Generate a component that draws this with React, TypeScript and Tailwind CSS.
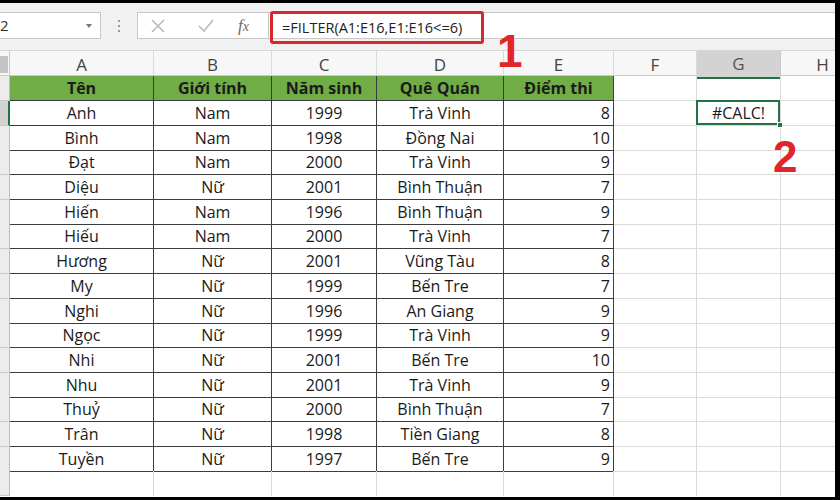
import React from "react";

type Row = [string, string, string, string, string];

const rows: Row[] = [
  ["Anh", "Nam", "1999", "Trà Vinh", "8"],
  ["Bình", "Nam", "1998", "Đồng Nai", "10"],
  ["Đạt", "Nam", "2000", "Trà Vinh", "9"],
  ["Diệu", "Nữ", "2001", "Bình Thuận", "7"],
  ["Hiến", "Nam", "1996", "Bình Thuận", "9"],
  ["Hiếu", "Nam", "2000", "Trà Vinh", "7"],
  ["Hương", "Nữ", "2001", "Vũng Tàu", "8"],
  ["My", "Nữ", "1999", "Bến Tre", "7"],
  ["Nghi", "Nữ", "1996", "An Giang", "9"],
  ["Ngọc", "Nữ", "1999", "Trà Vinh", "9"],
  ["Nhi", "Nữ", "2001", "Bến Tre", "10"],
  ["Nhu", "Nữ", "2001", "Trà Vinh", "9"],
  ["Thuỷ", "Nữ", "2000", "Bình Thuận", "7"],
  ["Trân", "Nữ", "1998", "Tiền Giang", "8"],
  ["Tuyền", "Nữ", "1997", "Bến Tre", "9"],
];

const headers = ["Tên", "Giới tính", "Năm sinh", "Quê Quán", "Điểm thi"];
const letters = ["A", "B", "C", "D", "E", "F", "G", "H"];

// column widths: row header, A..H
const cols = "grid grid-cols-[10px_144px_118px_105px_127px_110px_83px_84px_84px]";

const tableCell = "border-r border-b border-[#3c3c3c] flex items-center";
const emptyCell = "border-r border-b border-[#dadada]";

const Toolbar = () => (
  <div className="h-[48px] bg-[#f1f1f1] border-b border-[#d6d6d6] pt-[9px] flex items-start">
    {/* name box */}
    <div className="-ml-[1px] w-[102px] h-[27px] bg-white border border-[#c8c8c8] flex items-center justify-between pr-[8px] text-[15px] text-[#333]">
      <span>2</span>
      <span className="w-0 h-0 border-l-[3px] border-r-[3px] border-t-[4px] border-l-transparent border-r-transparent border-t-[#777]" />
    </div>
    {/* grip dots */}
    <div className="w-[36px] h-[27px] flex flex-col items-center justify-center gap-[3px]">
      <span className="w-[2px] h-[2px] bg-[#9a9a9a]" />
      <span className="w-[2px] h-[2px] bg-[#9a9a9a]" />
      <span className="w-[2px] h-[2px] bg-[#9a9a9a]" />
    </div>
    {/* cancel / enter / fx */}
    <div className="w-[132px] h-[27px] bg-white border border-[#c8c8c8] flex items-center">
      <svg className="ml-[13px]" width="14" height="14" viewBox="0 0 14 14">
        <path d="M1 1L13 13M13 1L1 13" stroke="#b9b9b9" strokeWidth="1.6" />
      </svg>
      <svg className="ml-[33px]" width="16" height="13" viewBox="0 0 16 13">
        <path d="M1 7L6 12L15 1" stroke="#b9b9b9" strokeWidth="1.6" fill="none" />
      </svg>
      <span className="ml-[24px] font-['Liberation_Serif',serif] italic text-[17px] text-[#6a6a6a] leading-none">
        f<span className="text-[14px]">x</span>
      </span>
    </div>
    {/* formula input */}
    <div className="relative flex-1 h-[27px] bg-white border-y border-[#c8c8c8]">
      <div className="absolute left-[1px] -top-[2px] w-[214px] h-[33px] border-[3px] border-[#d8262c] rounded-[3px] flex items-center pl-[9px] text-[14.5px] text-[#222]">
        =FILTER(A1:E16,E1:E16&lt;=6)
      </div>
    </div>
  </div>
);

const ColumnHeaders = () => (
  <div className={`${cols} h-[25px] bg-[#f7f7f7] border-b border-[#c9c9c9] text-[17px] text-[#444]`}>
    <div className="border-r border-[#c9c9c9] flex items-center">
      <div className="w-[8px] h-[17px] bg-[#c4c4c4]" />
    </div>
    {letters.map((l) => (
      <div
        key={l}
        className={
          l === "G"
            ? "bg-[#d3d3d3] border-r border-[#c9c9c9] border-b-2 border-b-[#217346] flex items-center justify-center text-[#555]"
            : "border-r border-[#dadada] flex items-center justify-center"
        }
      >
        {l}
      </div>
    ))}
  </div>
);

const RowHead = ({ active }: { active?: boolean }) => (
  <div
    className={
      active
        ? "bg-[#d3d3d3] border-b border-[#c9c9c9] border-r-2 border-r-[#217346]"
        : "bg-[#ececec] border-b border-[#c9c9c9] border-r border-r-[#bdbdbd]"
    }
  />
);

export default function App() {
  return (
    <div className="w-[840px] h-[500px] bg-black pt-[3px] pr-[5px] pb-[3px] overflow-hidden font-['Open_Sans',sans-serif]">
      <div className="relative h-full bg-white overflow-hidden">
        <Toolbar />
        <ColumnHeaders />

        {/* header row of the table */}
        <div className={`${cols} h-[25px] text-[16px] font-bold text-[#1b1b1b]`}>
          <RowHead />
          {headers.map((h) => (
            <div key={h} className={`${tableCell} bg-[#70ad47] justify-center`}>
              {h}
            </div>
          ))}
          <div className={emptyCell} />
          <div className={emptyCell} />
          <div className={emptyCell} />
        </div>

        {rows.map((r, i) => (
          <div key={i} className={`${cols} h-[24.7px] text-[16px] text-[#1a1a1a]`}>
            <RowHead active={i === 0} />
            {r.map((v, j) => (
              <div key={j} className={`${tableCell} ${j === 4 ? "justify-end pr-[3px]" : "justify-center"}`}>
                {v}
              </div>
            ))}
            <div className={emptyCell} />
            {i === 0 ? (
              <div className="relative border-r border-b border-[#dadada] flex items-center justify-center">
                #CALC!
                <div className="absolute -left-[1px] -top-[1px] right-0 bottom-0 border-2 border-[#217346]" />
                <div className="absolute -right-[3px] -bottom-[3px] w-[6px] h-[6px] bg-[#217346] border border-white" />
              </div>
            ) : (
              <div className={emptyCell} />
            )}
            <div className={emptyCell} />
          </div>
        ))}

        {/* trailing empty row */}
        <div className={`${cols} h-[24.7px]`}>
          <RowHead />
          {letters.map((l) => (
            <div key={l} className="border-r border-[#dadada]" />
          ))}
        </div>

        {/* step markers */}
        <div className="absolute left-[497px] top-[25px] font-['Liberation_Sans',Arial,sans-serif] font-bold text-[46px] leading-none text-[#e1252b]">
          1
        </div>
        <div className="absolute left-[773px] top-[132px] font-['Liberation_Sans',Arial,sans-serif] font-bold text-[44px] leading-none text-[#e1252b]">
          2
        </div>
      </div>
    </div>
  );
}
